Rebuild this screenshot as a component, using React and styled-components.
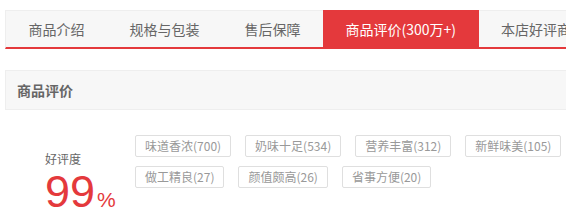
import React from 'react'
import styled, { createGlobalStyle } from 'styled-components'

const red = '#e4393c'

const GlobalStyle = createGlobalStyle`
  body {
    margin: 0;
    background: #fff;
    overflow: hidden;
    font-family: "Noto Sans CJK SC", "Liberation Sans", sans-serif;
  }
`

const Page = styled.div`
  width: 990px;
  padding: 10px 0 0 5px;
`

const TabBar = styled.ul`
  display: flex;
  margin: 0;
  padding: 0;
  list-style: none;
  background: #f7f7f7;
  border: 1px solid #eee;
  border-bottom: 2px solid ${red};
`

const Tab = styled.li`
  padding: 0 22.5px;
  height: 36px;
  line-height: 36px;
  font-size: 14px;
  color: ${p => (p.$active ? '#fff' : '#666')};
  background: ${p => (p.$active ? red : 'transparent')};
  margin-top: ${p => (p.$active ? '-1px' : '0')};
  padding-top: ${p => (p.$active ? '1px' : '0')};
  white-space: nowrap;
`

const SectionHead = styled.div`
  margin-top: 21px;
  height: 38px;
  line-height: 38px;
  padding-left: 11px;
  background: #f7f7f7;
  border: 1px solid #eee;
  font-size: 14px;
  font-weight: bold;
  color: #666;
`

const CommentBody = styled.div`
  display: flex;
  padding-top: 25px;
`

const Rating = styled.div`
  width: 90px;
  padding: 15px 0 0 40px;
`

const RateLabel = styled.div`
  font-size: 12px;
  line-height: 18px;
  color: #666;
`

const RateValue = styled.div`
  margin-top: 1px;
  font-family: "Liberation Sans", Arial, sans-serif;
  font-size: 45px;
  line-height: 45px;
  color: ${red};

  span {
    font-size: 21px;
    margin-left: 2px;
  }
`

const Tags = styled.div`
  display: flex;
  flex-wrap: wrap;
  align-content: flex-start;
  gap: 9px 14px;
  width: 440px;
`

const Tag = styled.span`
  height: 20px;
  line-height: 20px;
  padding: 0 9px;
  border: 1px solid #dfdfdf;
  border-radius: 2px;
  font-size: 12px;
  color: #999;
  white-space: nowrap;
`

const tabs = ['商品介绍', '规格与包装', '售后保障', '商品评价(300万+)', '本店好评商品']
const tags = [
  '味道香浓(700)',
  '奶味十足(534)',
  '营养丰富(312)',
  '新鲜味美(105)',
  '做工精良(27)',
  '颜值颇高(26)',
  '省事方便(20)',
]

const App = () => {
  return (
    <Page>
      <GlobalStyle />
      <TabBar>
        {tabs.map((t, i) => (
          <Tab key={t} $active={i === 3}>{t}</Tab>
        ))}
      </TabBar>

      <SectionHead>商品评价</SectionHead>

      <CommentBody>
        <Rating>
          <RateLabel>好评度</RateLabel>
          <RateValue>99<span>%</span></RateValue>
        </Rating>
        <Tags>
          {tags.map(t => (
            <Tag key={t}>{t}</Tag>
          ))}
        </Tags>
      </CommentBody>
    </Page>
  )
}

export default App
